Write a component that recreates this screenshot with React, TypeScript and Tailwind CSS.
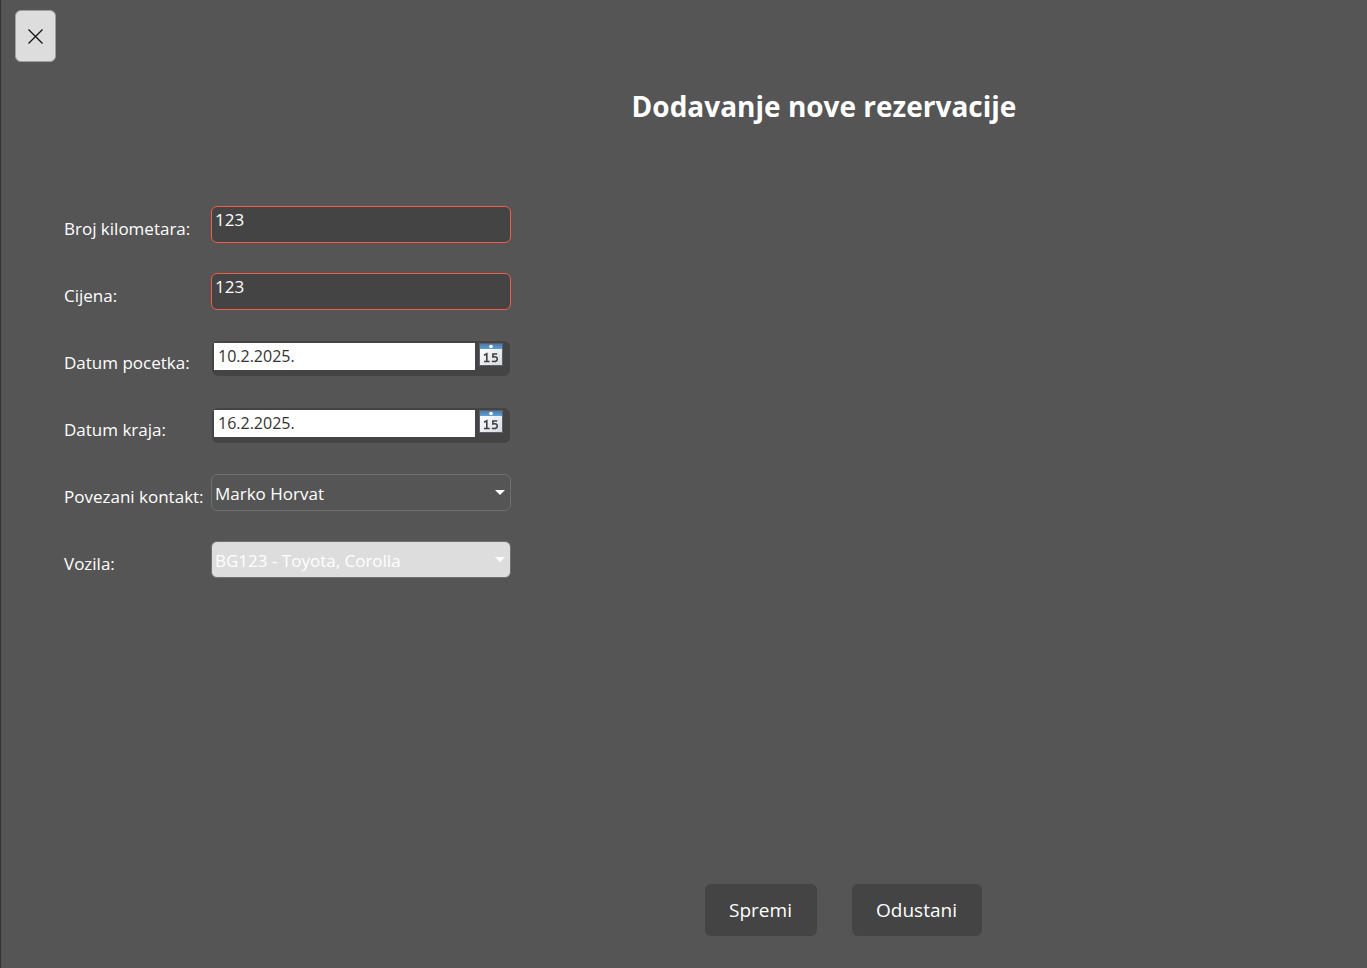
import { useState } from "react";
import type { ReactNode } from "react";

function Row({ id, label, children }: { id: string; label: string; children: ReactNode }) {
  return (
    <div className="flex h-[37px] items-center">
      <label htmlFor={id} className="w-[147px] shrink-0 whitespace-nowrap pt-2 text-[17px] leading-6">
        {label}
      </label>
      <div className="h-full w-[300px]">{children}</div>
    </div>
  );
}

function NumberField({ id, label }: { id: string; label: string }) {
  const [value, setValue] = useState("123");
  return (
    <Row id={id} label={label}>
      <input
        id={id}
        type="text"
        inputMode="numeric"
        value={value}
        onChange={(e) => setValue(e.target.value)}
        className="block h-full w-full rounded-md border border-[#f55c45] bg-[#444444] px-[3px] pb-2.5 text-[17px] leading-6 text-white outline-none"
      />
    </Row>
  );
}

function CalendarIcon() {
  return (
    <svg width="24" height="23" viewBox="0 0 24 23" aria-hidden="true">
      <defs>
        <linearGradient id="calTop" x1="0" y1="0" x2="0" y2="1">
          <stop offset="0" stopColor="#487cab" />
          <stop offset="1" stopColor="#5f9fd4" />
        </linearGradient>
        <linearGradient id="calPage" x1="0" y1="0" x2="1" y2="1">
          <stop offset="0" stopColor="#ffffff" />
          <stop offset="1" stopColor="#d5d9de" />
        </linearGradient>
      </defs>
      <rect x="0" y="0" width="24" height="23" fill="#5b6069" />
      <rect x="1" y="1" width="22" height="5" fill="url(#calTop)" />
      <rect x="1" y="6" width="22" height="16" fill="url(#calPage)" />
      <circle cx="12" cy="3.5" r="1.8" fill="#ffffff" />
      <path d="M5 12.200 L7.800 10.800 V18.200 M5 18.500 H10.600" fill="none" stroke="#404040" strokeWidth="1.600" />
      <path
        d="M18.200 11 H13.900 V14 C16.500 13.300 18.300 14 18.300 16 C18.300 18.700 15.500 18.900 12.900 18.200"
        fill="none"
        stroke="#404040"
        strokeWidth="1.600"
      />
    </svg>
  );
}

function DateField({ id, label, initial }: { id: string; label: string; initial: string }) {
  const [value, setValue] = useState(initial);
  return (
    <Row id={id} label={label}>
      <div className="h-full w-full p-px">
        <div className="flex h-full items-start gap-1 rounded-md bg-[#444444] p-0.5">
          <input
            id={id}
            type="text"
            value={value}
            onChange={(e) => setValue(e.target.value)}
            className="h-[27px] w-[261px] bg-white px-1 pb-0.5 text-[16px] leading-6 text-[#333333] outline-none"
          />
          <button type="button" aria-label={`${label} kalendar`} className="shrink-0">
            <CalendarIcon />
          </button>
        </div>
      </div>
    </Row>
  );
}

function SelectField({ id, label, option, light }: { id: string; label: string; option: string; light?: boolean }) {
  return (
    <Row id={id} label={label}>
      <div className="relative h-full">
        <select
          id={id}
          className={`block h-full w-full appearance-none rounded-md border border-[#707070] px-[3px] pt-0.5 text-[17px] leading-6 text-white outline-none ${
            light ? "bg-[#dddddd]" : "bg-[#555555]"
          }`}
        >
          <option>{option}</option>
        </select>
        <svg
          width="10"
          height="5"
          viewBox="0 0 10 5"
          className="pointer-events-none absolute right-1.5 top-4"
          aria-hidden="true"
        >
          <path d="M0 0 H10 L5 5 Z" fill="#ffffff" />
        </svg>
      </div>
    </Row>
  );
}

export default function App() {
  return (
    <div className="flex min-h-screen flex-col border-l border-[#333333] bg-[#555555] font-['Open_Sans','Noto_Sans',sans-serif] text-white">
      <header className="px-3.5 pt-2.5">
        <button
          type="button"
          aria-label="Zatvori"
          className="flex h-[52px] w-[41px] items-center justify-center rounded-md border border-[#a0a0a0] bg-[#dddddd]"
        >
          <svg width="15" height="15" viewBox="0 0 15 15" aria-hidden="true">
            <path d="M0.500 0.500 L14.500 14.500 M14.500 0.500 L0.500 14.500" stroke="#111111" strokeWidth="1.300" />
          </svg>
        </button>
      </header>
      <h1 className="pl-[280px] pt-6 text-center text-[28px] font-bold leading-10">Dodavanje nove rezervacije</h1>
      <form className="flex grow flex-col" onSubmit={(e) => e.preventDefault()}>
        <div className="flex flex-col gap-[30px] pl-[63px] pt-20">
          <NumberField id="kilometri" label="Broj kilometara:" />
          <NumberField id="cijena" label="Cijena:" />
          <DateField id="pocetak" label="Datum pocetka:" initial="10.2.2025." />
          <DateField id="kraj" label="Datum kraja:" initial="16.2.2025." />
          <SelectField id="kontakt" label="Povezani kontakt:" option="Marko Horvat" />
          <SelectField id="vozila" label="Vozila:" option="BG123 - Toyota, Corolla" light />
        </div>
        <div className="mt-auto flex justify-center gap-[35px] pb-8 pl-[318px] pt-8">
          <button type="submit" className="h-[52px] w-28 rounded-md bg-[#444444] text-[19px] leading-6">
            Spremi
          </button>
          <button type="button" className="h-[52px] w-[130px] rounded-md bg-[#444444] text-[19px] leading-6">
            Odustani
          </button>
        </div>
      </form>
    </div>
  );
}
